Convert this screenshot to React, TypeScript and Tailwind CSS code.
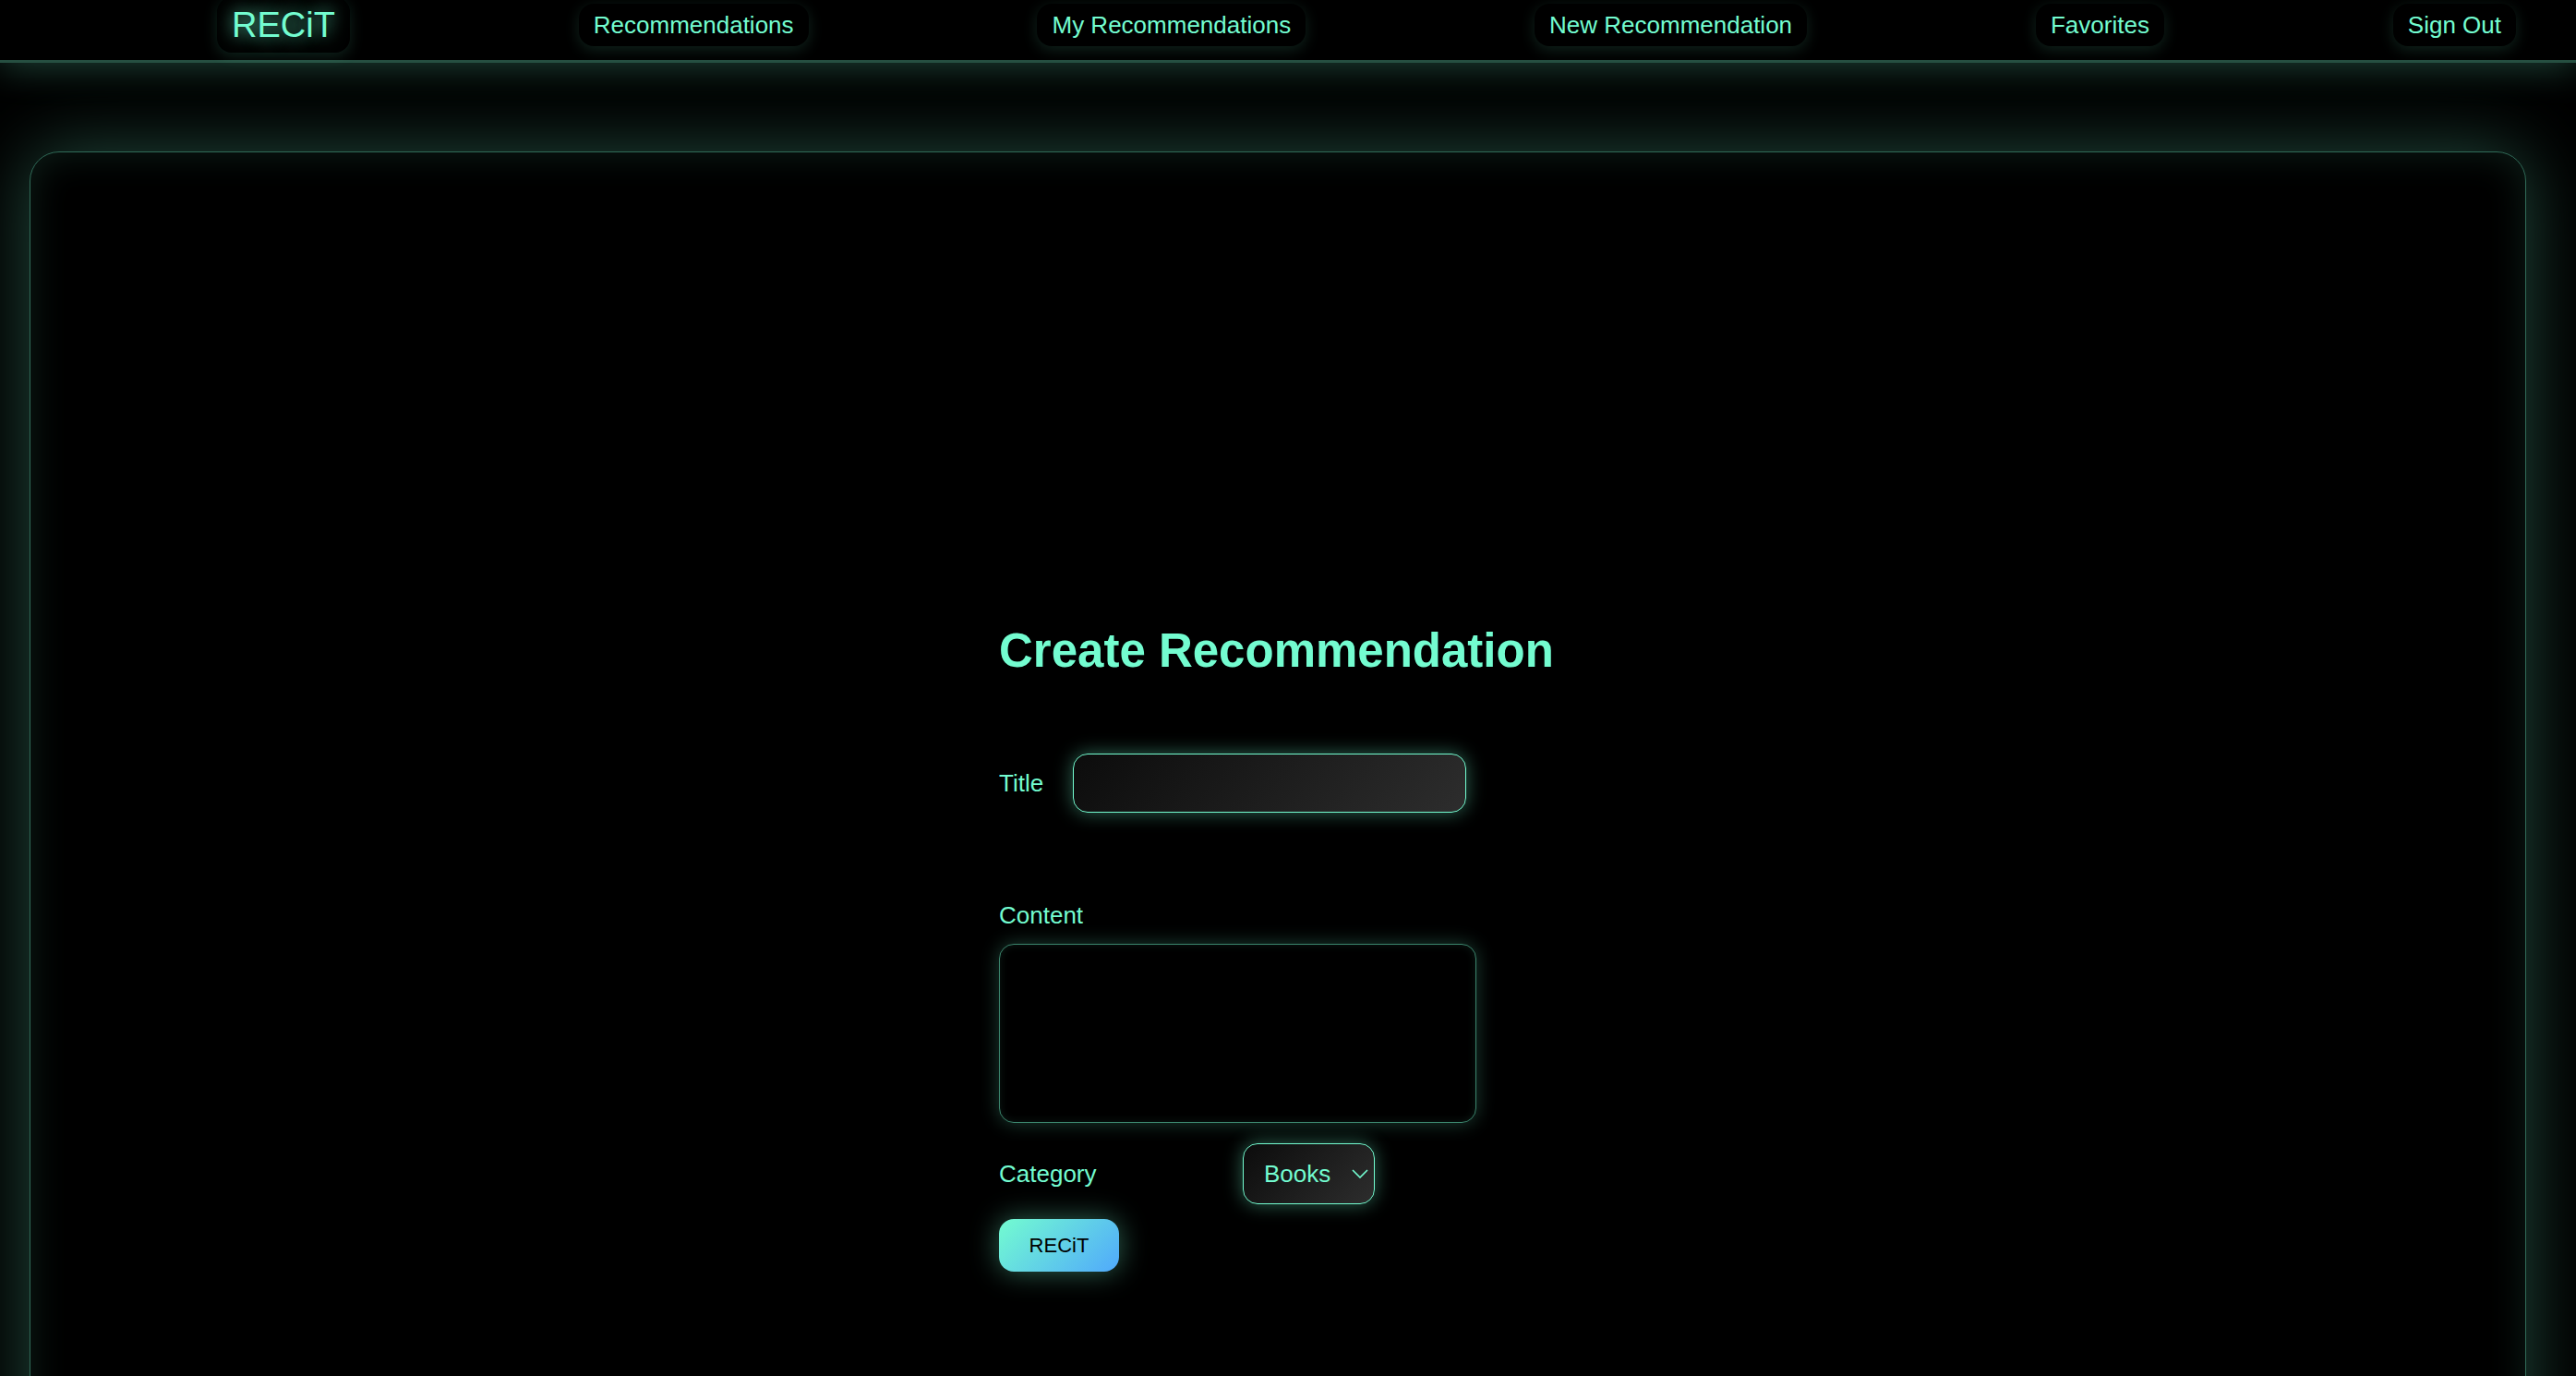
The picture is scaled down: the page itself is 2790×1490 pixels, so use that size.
import { useState } from "react";

const links = [
  "Recommendations",
  "My Recommendations",
  "New Recommendation",
  "Favorites",
  "Sign Out",
];

const categories = ["Books", "Movies", "Music", "Games"];

function NavBar() {
  return (
    <header className="relative z-10 border-b-3 border-[#264f41] bg-black shadow-[0_4px_40px_rgba(115,252,208,0.27)]">
      <nav
        aria-label="Main"
        className="flex h-[65px] items-start justify-between pr-[65px] pl-[235px]"
      >
        <a
          href="#home"
          className="-mt-[3px] flex h-[60px] items-center rounded-2xl px-4 text-[38px] leading-none shadow-[0_4px_16px_rgba(115,252,208,0.14)] [text-shadow:0_0_20px_rgba(115,252,208,0.7),0_0_20px_rgba(115,252,208,0.3)]"
        >
          RECiT
        </a>
        {links.map((label) => (
          <a
            key={label}
            href={"#" + label.toLowerCase().replace(/ /g, "-")}
            className="mt-1 flex h-[46px] items-center rounded-2xl px-4 shadow-[0_4px_16px_rgba(115,252,208,0.14)]"
          >
            {label}
          </a>
        ))}
      </nav>
    </header>
  );
}

function RecommendationForm() {
  const [title, setTitle] = useState("");
  const [content, setContent] = useState("");
  const [category, setCategory] = useState("Books");

  return (
    <form
      onSubmit={(event) => event.preventDefault()}
      className="flex w-[604px] flex-col items-start"
    >
      <h1 className="text-[51px] leading-[60px] font-bold">
        Create Recommendation
      </h1>

      <div className="mt-[81px] flex items-center gap-8">
        <label htmlFor="title">Title</label>
        <input
          id="title"
          type="text"
          value={title}
          onChange={(event) => setTitle(event.target.value)}
          className="h-16 w-[426px] rounded-2xl border border-[#73fcd0] bg-[linear-gradient(135deg,#0c0c0c,#2d2d2d)] px-5 shadow-[0_0_20px_rgba(115,252,208,0.4)] outline-none"
        />
      </div>

      <label htmlFor="content" className="mt-24">
        Content
      </label>
      <textarea
        id="content"
        value={content}
        onChange={(event) => setContent(event.target.value)}
        className="mt-4 h-[194px] w-[517px] resize-none rounded-2xl border border-[#3b846c] bg-black p-5 shadow-[0_0_20px_rgba(115,252,208,0.25),inset_0_0_10px_rgba(115,252,208,0.1)] outline-none"
      />

      <div className="mt-[22px] flex w-[407px] items-center justify-between">
        <label htmlFor="category">Category</label>
        <div className="relative">
          <select
            id="category"
            value={category}
            onChange={(event) => setCategory(event.target.value)}
            className="h-[66px] w-[143px] appearance-none rounded-2xl border border-[#73fcd0] bg-[linear-gradient(135deg,#0c0c0c,#2d2d2d)] pl-[22px] shadow-[0_0_20px_rgba(115,252,208,0.4)] outline-none"
          >
            {categories.map((name) => (
              <option key={name} className="bg-black">
                {name}
              </option>
            ))}
          </select>
          <svg
            aria-hidden="true"
            viewBox="0 0 18 10"
            className="pointer-events-none absolute top-7 right-[7px] h-[10px] w-[18px] fill-none stroke-current"
          >
            <path d="M1 1l8 8 8-8" strokeWidth="1.6" />
          </svg>
        </div>
      </div>

      <button
        type="submit"
        className="mt-4 h-[57px] w-[130px] rounded-2xl bg-[linear-gradient(135deg,#73fcd0,#50a9fc)] text-[22px] text-black shadow-[0_0_30px_rgba(115,252,208,0.4)]"
      >
        RECiT
      </button>
    </form>
  );
}

export default function App() {
  return (
    <div className="h-screen overflow-y-auto bg-black font-['Liberation_Sans',Arial,sans-serif] text-[26px] leading-[30px] text-[#73fcd0] [scrollbar-width:none]">
      <NavBar />
      <main className="mt-24 mr-[54px] mb-24 ml-8 flex min-h-screen justify-center rounded-[32px] border border-[#306b58] bg-black pt-[510px] pb-64 shadow-[0_0_80px_rgba(115,252,208,0.3),inset_0_0_40px_rgba(115,252,208,0.12)]">
        <RecommendationForm />
      </main>
    </div>
  );
}
